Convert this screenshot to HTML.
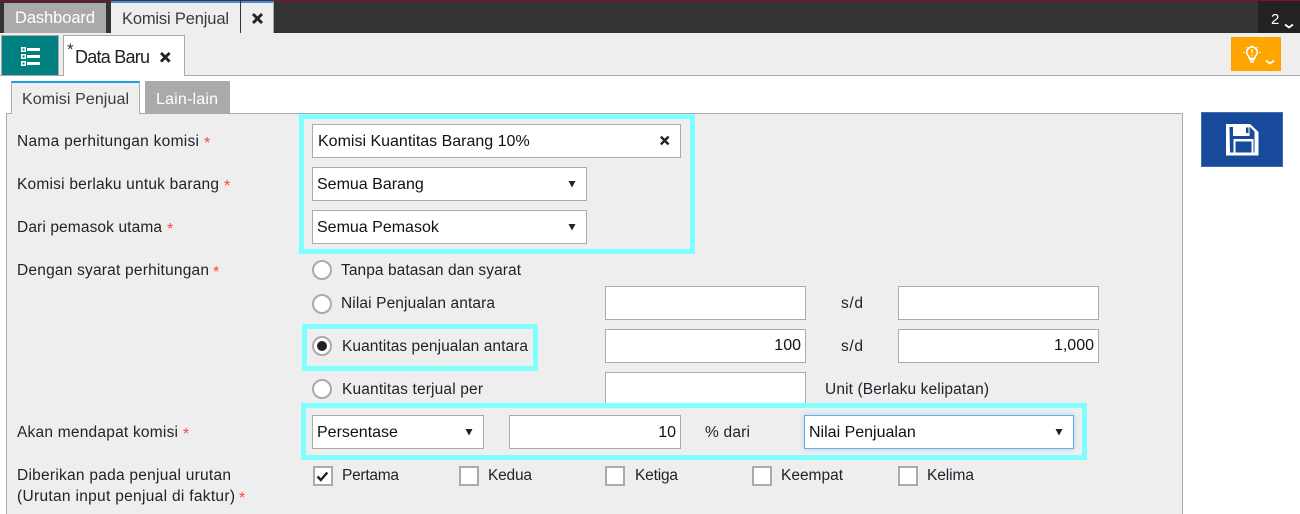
<!DOCTYPE html>
<html><head><meta charset="utf-8"><style>
html,body{margin:0;padding:0;background:#fff}
#p{position:relative;width:1300px;height:514px;overflow:hidden;background:#fff;font-family:"Liberation Sans",sans-serif}
#p div{position:absolute;box-sizing:border-box}
.i{background:#fff;border:1px solid #aaa}
.c{background:#fff;border:2px solid #aaa;width:20px;height:20px}
.r{background:#fff;border:2px solid #aaa;width:20px;height:20px;border-radius:50%}
.b{border:5px solid #80ffff}
svg{position:absolute;left:0;top:0}
.l{font-size:15.5px;fill:#22222c}
.f{font-size:16px;fill:#111}
.s{font-size:16px;fill:#f44}
</style></head><body><div id="p">
<div style="left:0;top:0;width:1300px;height:33px;background:#333"></div>
<div style="left:0;top:0;width:1300px;height:1px;background:#8a0a2c"></div>
<div style="left:1258px;top:1px;width:42px;height:32px;background:#222"></div>
<div style="left:4px;top:3px;width:102px;height:30px;background:#aaa"></div>
<div style="left:111px;top:1px;width:129px;height:32px;background:#eee;border-top:2px solid #1ba1e2"></div>
<div style="left:241px;top:1px;width:33px;height:32px;background:#eee;border-top:2px solid #1ba1e2;border-right:1px solid #aaa"></div>
<div style="left:0;top:33px;width:1300px;height:43px;background:#eee"></div>
<div style="left:0;top:75px;width:1300px;height:1px;background:#aaa"></div>
<div style="left:1px;top:35px;width:58px;height:41px;background:#008080;border:1px solid #aaa"></div>
<div style="left:63px;top:35px;width:122px;height:41px;background:#fff;border:1px solid #aaa;border-bottom:0"></div>
<div style="left:1231px;top:37px;width:50px;height:34px;background:#ffa500"></div>
<div style="left:11px;top:81px;width:129px;height:33px;background:#eee;border-top:2px solid #1ba1e2;border-left:1px solid #aaa;border-right:1px solid #aaa"></div>
<div style="left:145px;top:81px;width:85px;height:32px;background:#aaa"></div>
<div style="left:6px;top:113px;width:1177px;height:410px;background:#eee;border:1px solid #aaa"></div>
<div style="left:12px;top:112px;width:127px;height:3px;background:#eee"></div>
<div style="left:1201px;top:112px;width:82px;height:55px;background:#174a9b;border:1px solid #3d6ca8"></div>

<div class="b" style="left:299px;top:114px;width:396px;height:140px"></div>
<div class="b" style="left:302px;top:324px;width:236px;height:47px"></div>

<div class="i" style="left:312px;top:124px;width:369px;height:34px"></div>
<div class="i" style="left:312px;top:167px;width:275px;height:34px"></div>
<div class="i" style="left:312px;top:210px;width:275px;height:34px"></div>
<div class="i" style="left:605px;top:286px;width:201px;height:34px"></div>
<div class="i" style="left:898px;top:286px;width:201px;height:34px"></div>
<div class="i" style="left:605px;top:329px;width:201px;height:34px"></div>
<div class="i" style="left:898px;top:329px;width:201px;height:34px"></div>
<div class="i" style="left:605px;top:372px;width:201px;height:34px"></div>
<div class="b" style="left:301px;top:403px;width:786px;height:57px"></div>
<div class="i" style="left:312px;top:415px;width:172px;height:34px"></div>
<div class="i" style="left:509px;top:415px;width:172px;height:34px"></div>
<div class="i" style="left:804px;top:415px;width:270px;height:34px;border-color:#66afe9;box-shadow:0 0 4px rgba(102,175,233,.5)"></div>

<div class="r" style="left:312px;top:260px"></div>
<div class="r" style="left:312px;top:294px"></div>
<div class="r" style="left:312px;top:336px"></div>
<div style="left:317px;top:341px;width:10px;height:10px;border-radius:50%;background:#222"></div>
<div class="r" style="left:312px;top:379px"></div>
<div class="c" style="left:313px;top:466px"></div>
<div class="c" style="left:459px;top:466px"></div>
<div class="c" style="left:605px;top:466px"></div>
<div class="c" style="left:752px;top:466px"></div>
<div class="c" style="left:898px;top:466px"></div>

<svg width="1300" height="514" viewBox="0 0 1300 514">
<text x="15" y="23" font-size="16.500" fill="#fff" textLength="80">Dashboard</text>
<text x="122" y="24" font-size="16.500" fill="#3a3a44" textLength="107">Komisi Penjual</text>
<text x="75" y="63" font-size="18" fill="#222" textLength="75">Data Baru</text>
<text x="67" y="55" font-size="17" fill="#333">*</text>
<text x="22" y="104" font-size="16" fill="#3a3a44" textLength="107">Komisi Penjual</text>
<text x="156" y="104" font-size="16" fill="#fff" textLength="62">Lain-lain</text>
<text x="1271" y="24" font-size="15" fill="#fff">2</text>

<g fill="#222">
<path d="M252 15l2-2 3.500 3.500 3.500-3.500 2 2-3.500 3.500 3.500 3.500-2 2-3.500-3.500-3.500 3.500-2-2 3.500-3.500z"/>
<path d="M160 54l2-2 3.300 3.300 3.300-3.300 2 2-3.300 3.300 3.300 3.300-2 2-3.300-3.300-3.300 3.300-2-2 3.300-3.300z"/>
<path d="M660 137.500l1.700-1.700 3 3 3-3 1.700 1.700-3 3 3 3-1.700 1.700-3-3-3 3-1.700-1.700 3-3z"/>
<path d="M568.500 181h7l-3.500 6.500z"/>
<path d="M568.500 224h7l-3.500 6.500z"/>
<path d="M465.500 429h7l-3.500 6.500z"/>
<path d="M1055.500 429h7l-3.500 6.500z"/>
</g>

<g fill="none" stroke="#fff" stroke-width="1.800">
<path d="M1285 24.500l4 3 4-3"/>
<path d="M1266 60.500l4 3 4-3"/>
</g>
<g fill="#fff">
<rect x="21" y="47" width="5" height="5"/>
<rect x="21" y="54" width="5" height="5"/>
<rect x="21" y="61" width="5" height="5"/>
<rect x="22.500" y="48.500" width="2" height="2" fill="#008080"/>
<rect x="22.500" y="55.500" width="2" height="2" fill="#008080"/>
<rect x="22.500" y="62.500" width="2" height="2" fill="#008080"/>
<rect x="27" y="48" width="13" height="3"/>
<rect x="27" y="55" width="13" height="3"/>
<rect x="27" y="62" width="13" height="3"/>
</g>
<path d="M1248.500 56a5.200 5.200 0 1 1 7 0c-.6.7-.9 1.400-.9 2.500h-5.200c0-1.100-.3-1.800-.9-2.500z" fill="#ffa500" stroke="#fff" stroke-width="1.600"/>
<path d="M1249.500 60h5M1250 62h4" fill="none" stroke="#fff" stroke-width="1.500"/>
<path d="M1252 49v4.500M1252 55v1.300" fill="none" stroke="#fff" stroke-width="1.200"/>
<path d="M1246 47l1.200 1.200M1258 47l-1.200 1.200M1243.500 52.500h1.500M1260.500 52.500h-1.500M1252 45v1" fill="none" stroke="#fff" stroke-width=".9" opacity=".85"/>

<path fill="#fff" d="M1226 124h24l8.500 8v23.500h-32.500z"/>
<path fill="#174a9b" d="M1229.500 127h3.500v9h16.500v-9h.5l4.500 4.500v21h-1v-13.500h-20v13.500h-3.500z"/>
<rect x="1235.500" y="141.500" width="16" height="11" fill="#174a9b"/>
<rect x="1246" y="127.500" width="2.500" height="5.500" fill="#174a9b"/>

<path d="M317.500 476.500l3.300 3.500 6.500-7.500" fill="none" stroke="#222" stroke-width="2.400"/>

<text class="l" x="17" y="146" textLength="182">Nama perhitungan komisi</text><text class="s" x="204" y="148">*</text>
<text class="l" x="17" y="189" textLength="202">Komisi berlaku untuk barang</text><text class="s" x="224" y="191">*</text>
<text class="l" x="17" y="232" textLength="145">Dari pemasok utama</text><text class="s" x="167" y="234">*</text>
<text class="l" x="17" y="275" textLength="192">Dengan syarat perhitungan</text><text class="s" x="213" y="277">*</text>
<text class="l" x="17" y="437" textLength="161">Akan mendapat komisi</text><text class="s" x="183" y="439">*</text>
<text class="l" x="17" y="480" textLength="214">Diberikan pada penjual urutan</text>
<text class="l" x="17" y="501" textLength="218">(Urutan input penjual di faktur)</text><text class="s" x="239" y="503">*</text>

<text class="f" x="318" y="146">Komisi Kuantitas Barang 10%</text>
<text class="f" x="317" y="189">Semua Barang</text>
<text class="f" x="317" y="232">Semua Pemasok</text>
<text class="f" x="317" y="437">Persentase</text>
<text class="f" x="809" y="437">Nilai Penjualan</text>
<text class="f" x="676" y="437" text-anchor="end">10</text>
<text class="f" x="801" y="350" text-anchor="end">100</text>
<text class="f" x="1094" y="350" text-anchor="end">1,000</text>

<text class="l" x="341" y="275" textLength="180">Tanpa batasan dan syarat</text>
<text class="l" x="341" y="308" textLength="154">Nilai Penjualan antara</text>
<text class="l" x="342" y="351" textLength="186">Kuantitas penjualan antara</text>
<text class="l" x="342" y="394" textLength="141">Kuantitas terjual per</text>
<text class="l" x="841" y="308" textLength="22">s/d</text>
<text class="l" x="841" y="351" textLength="22">s/d</text>
<text class="l" x="825" y="394" textLength="164">Unit (Berlaku kelipatan)</text>
<text class="l" x="705" y="437" textLength="45">% dari</text>
<text class="l" x="342" y="480" textLength="57">Pertama</text>
<text class="l" x="488" y="480" textLength="44">Kedua</text>
<text class="l" x="635" y="480" textLength="43">Ketiga</text>
<text class="l" x="781" y="480" textLength="62">Keempat</text>
<text class="l" x="927" y="480" textLength="47">Kelima</text>
</svg>
</div></body></html>
